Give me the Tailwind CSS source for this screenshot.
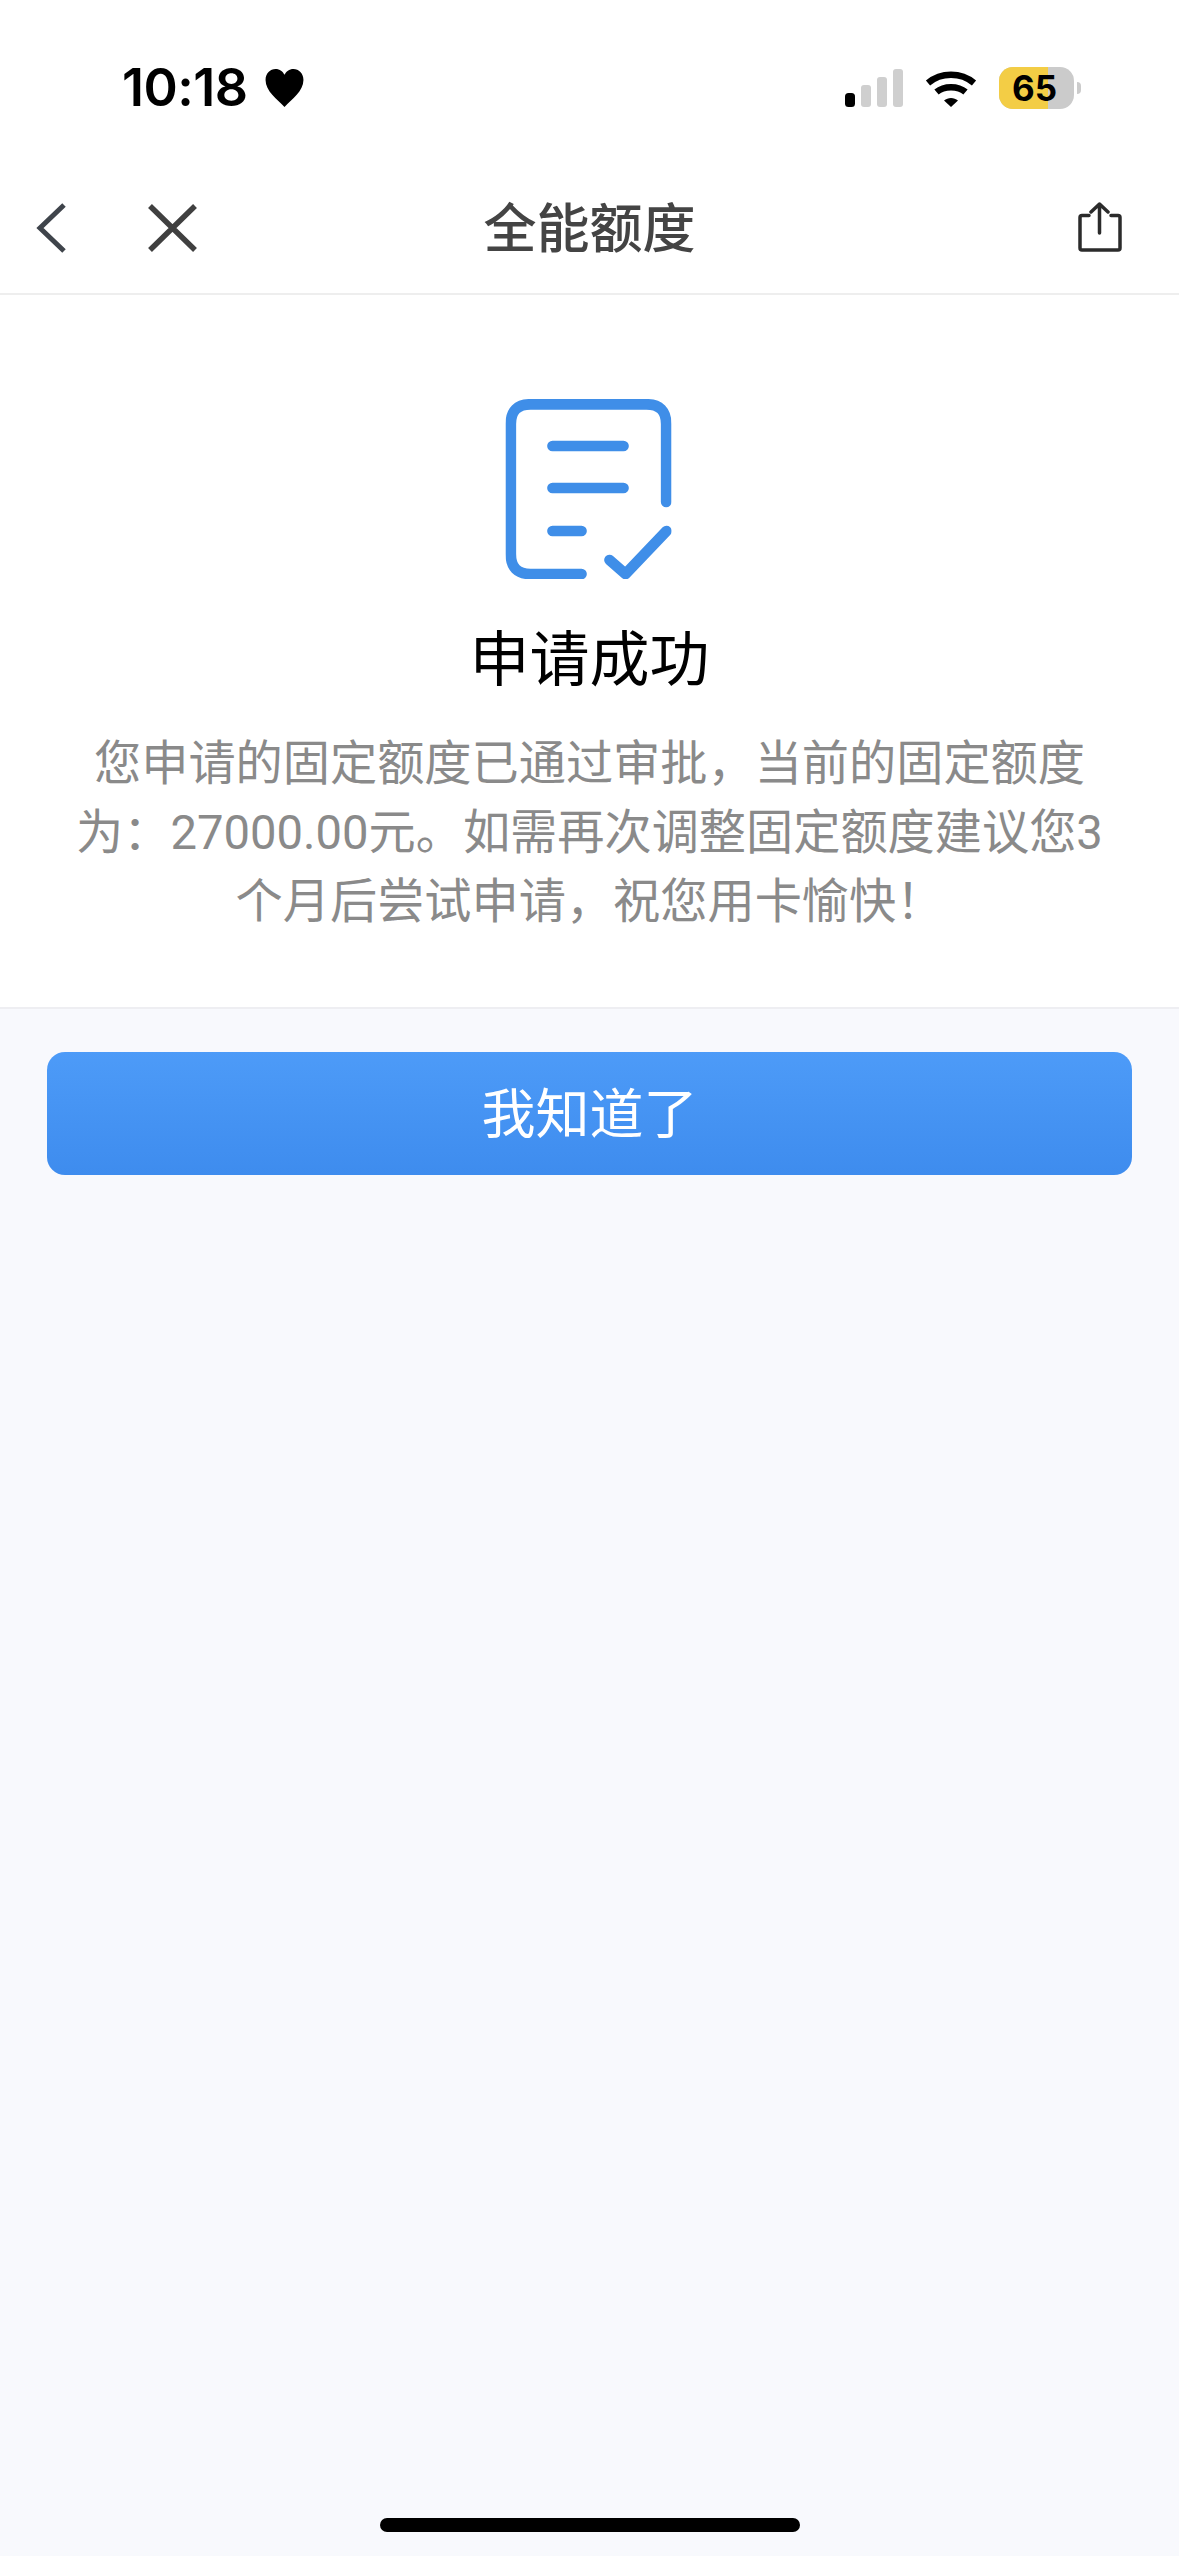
<!DOCTYPE html>
<html lang="zh-CN">
<head>
  <meta charset="UTF-8">
  <meta name="viewport" content="width=device-width, initial-scale=1.0">
  <title>全能额度</title>
  <script src="https://cdn.jsdelivr.net/npm/@tailwindcss/browser@4"></script>
</head>
<body class="bg-[#f8f9fd] font-['Roboto','Noto_Sans_CJK_SC',sans-serif]">
  <div class="relative w-[1179px] h-[2556px] flex flex-col overflow-hidden">

    <!-- Status bar -->
    <div class="h-[170px] bg-white flex justify-between items-start pt-[60px] pl-[122px] pr-[98px]">
      <div class="flex items-center gap-[16px] h-[56px]">
        <span class="font-['Inter',sans-serif] text-[52px] leading-none font-semibold text-black tracking-[-0.5px]">10:18</span>
        <svg class="w-[41px] h-[40px]" viewBox="0 0 38 38"><path d="M19 37C12 30 1 22 1 11.5 1 5 5.500 1 10.500 1 14.500 1 17.500 3.500 19 6.500 20.500 3.500 23.500 1 27.500 1 32.500 1 37 5 37 11.500 37 22 26 30 19 37Z" fill="#000"/></svg>
      </div>
      <div class="flex items-center h-[56px]">
        <!-- Signal -->
        <svg class="w-[60px] h-[38px] mr-[20px]" viewBox="0 0 60 38">
          <rect x="0" y="24" width="10" height="14" rx="3.500" fill="#000"/>
          <rect x="16" y="16" width="10" height="22" rx="3" fill="#cfcfcf"/>
          <rect x="32" y="8" width="10" height="30" rx="3" fill="#cfcfcf"/>
          <rect x="48" y="0" width="10" height="38" rx="3" fill="#cfcfcf"/>
        </svg>
        <!-- Wifi -->
        <svg class="w-[52px] h-[38px] mr-[22px]" viewBox="0 0 52 38">
          <path d="M3 14C16 3 36 3 49 14" fill="none" stroke="#000" stroke-width="6.500"/>
          <path d="M11.500 23C19 16.500 33 16.500 40.500 23" fill="none" stroke="#000" stroke-width="6.500"/>
          <path d="M19 31.500C23 28 29 28 33 31.500L26 38Z" fill="#000"/>
        </svg>
        <!-- Battery -->
        <div class="relative w-[75px] h-[42px] rounded-[14px] overflow-hidden bg-[#cbcbcb] flex items-center pl-[13px]">
          <div class="absolute left-0 top-0 bottom-0 w-[49px] bg-[#f3cd45]"></div>
          <span class="relative font-['Inter',sans-serif] text-[35px] leading-none font-bold text-black">65</span>
        </div>
        <div class="w-[4px] h-[12px] ml-[3px] rounded-r-full bg-[#cbcbcb]"></div>
      </div>
    </div>

    <!-- Nav bar -->
    <div class="relative h-[125px] bg-white border-b-2 border-[#eeeeee] flex items-center justify-center">
      <svg class="absolute left-[35px] top-[30px] w-[36px] h-[56px]" viewBox="0 0 36 56" fill="none" stroke="#3f444b" stroke-width="5">
        <path d="M29 5 5 28 29 51"/>
      </svg>
      <svg class="absolute left-[145px] top-[30px] w-[54px] h-[56px]" viewBox="0 0 54 56" fill="none" stroke="#404040" stroke-width="5.500">
        <path d="M5 6 50 50M50 6 5 50"/>
      </svg>
      <span class="text-[53px] leading-none font-medium text-[#444444] -mt-[3px]">全能额度</span>
      <svg class="absolute left-[1078px] top-[32px] w-[44px] h-[50px]" viewBox="0 0 44 50" fill="none" stroke="#2b2b2b" stroke-width="3.500" stroke-linecap="round" stroke-linejoin="round">
        <path d="M11 13.500H4Q2 13.500 2 15.500V46Q2 48 4 48H40Q42 48 42 46V15.500Q42 13.500 40 13.500H33"/>
        <path d="M21.500 31V2M13 10 21.500 2 30 10"/>
      </svg>
    </div>

    <!-- Result card -->
    <div class="h-[714px] bg-white border-b-2 border-[#eeeef2] flex flex-col items-center pt-[104px]">
      <svg class="w-[166px] h-[180px] -translate-x-[1.5px]" viewBox="0 0 166 180" fill="none" stroke="#3f8ee8" stroke-width="10.700" stroke-linecap="round" stroke-linejoin="round">
        <path d="M160.700 103V25Q160.700 5.300 141 5.300H25Q5.300 5.300 5.300 25V155Q5.300 175 25 175H76"/>
        <path d="M47 47H118M47 89H118M47 132H76"/>
        <path d="M104 161 120 175 161 132"/>
      </svg>
      <h1 class="mt-[42px] text-[60px] leading-[80px] font-normal text-black">申请成功</h1>
      <p class="mt-[29px] w-[1030px] text-center text-[47.2px] leading-[69px] text-[#8a8a8a]">您申请的固定额度已通过审批，当前的固定额度为：27000.00元。如需再次调整固定额度建议您3个月后尝试申请，祝您用卡愉快！</p>
    </div>

    <!-- Action -->
    <div class="px-[47px] pt-[43px]">
      <button class="w-full h-[123px] rounded-[18px] bg-gradient-to-b from-[#4d9bf8] to-[#3e8cee] text-white text-[54px] leading-none pt-[5px]">我知道了</button>
    </div>

    <!-- Home indicator -->
    <div class="absolute left-[380px] top-[2518px] w-[420px] h-[14px] rounded-full bg-black"></div>
  </div>
</body>
</html>
